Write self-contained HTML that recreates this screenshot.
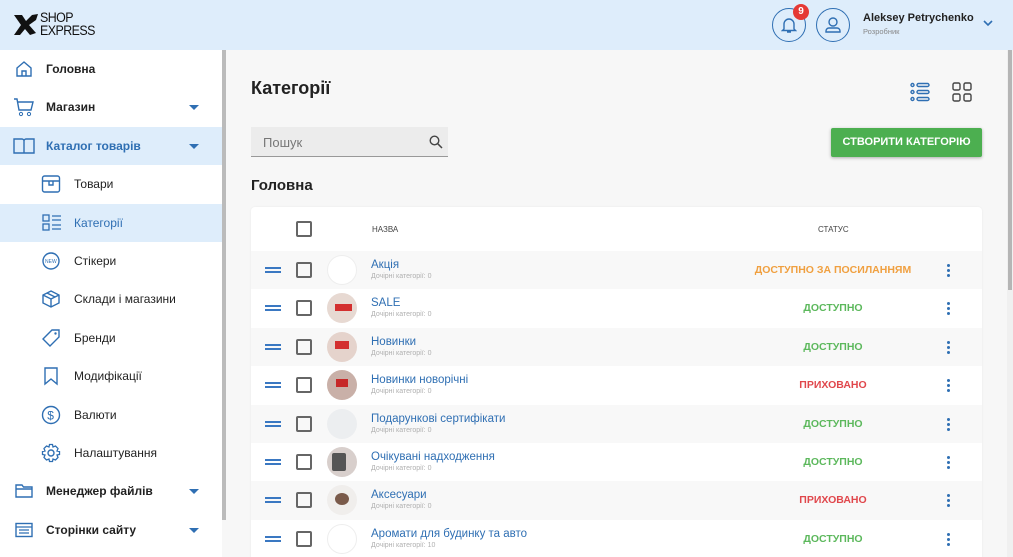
<!DOCTYPE html>
<html><head><meta charset="utf-8"><style>
*{box-sizing:border-box;margin:0;padding:0}
html,body{width:1013px;height:557px;overflow:hidden}
body{font-family:"Liberation Sans",sans-serif;background:#f7f7f7;position:relative}
.hdr{position:absolute;left:0;top:0;width:1013px;height:50px;background:#deedfb}
.side{position:absolute;left:0;top:50px;width:222px;height:507px;background:#fff}
.sbar{position:absolute;left:222px;top:50px;width:4px;height:470px;background:#bbb}
.rsb{position:absolute;left:1007px;top:50px;width:6px;height:507px;background:#f0f0f0}
.rsb div{position:absolute;left:1px;top:0;width:4px;height:240px;background:#b5b5b5}
.it{position:absolute;left:0;width:222px;height:38px;display:flex;align-items:center;font-size:12px;color:#222}
.it.sel{background:#deedfb;color:#2f6fb3}
.it svg{position:absolute}
.it .t{position:absolute}
.car{position:absolute;left:189px;top:17px;border:5px solid transparent;border-top:5px solid #2f6fb3;border-bottom:0;width:0;height:0}
.card{position:absolute;left:251px;top:207px;width:731px;height:360px;background:#fff;border-radius:4px;box-shadow:0 0 2px rgba(0,0,0,.06)}
.row{position:absolute;left:0;width:731px;height:38.4px}
.row.g{background:#f8f8f8}
.cb{position:absolute;left:45px;width:16px;height:16px;border:2px solid #666;border-radius:2px}
.drag{position:absolute;left:14px;width:16px;height:6px;border-top:2px solid #3a78c2;border-bottom:2px solid #3a78c2}
.av{position:absolute;left:76px;width:30px;height:30px;border-radius:50%;background:#e8e4e2}
.nm{position:absolute;left:120px;font-size:11.5px;color:#2f6fb3}
.sub{position:absolute;left:120px;font-size:7px;color:#b0b0b0}
.st{position:absolute;left:482px;width:200px;text-align:center;font-size:10.5px;font-weight:bold}
.dots{position:absolute;left:696px;width:3px}
.dots i{display:block;width:3px;height:3px;border-radius:50%;background:#2f6fb3;margin-bottom:2px}
.gr{color:#5cb85c}.rd{color:#e0474c}
</style></head><body>
<div class="hdr">
 <svg style="position:absolute;left:13px;top:13px" width="26" height="24" viewBox="0 0 26 24"><path d="M1 2 L9 2 L13 8 L19 2 L25 1 L23 7 L16 12 L23 20 L17 22 L12 16 L7 22 L1 22 L8 12 Z" fill="#111"/></svg>
 <div style="position:absolute;left:40px;top:12px;font-size:13.5px;line-height:12.5px;color:#111;letter-spacing:-.6px;transform:scaleX(.92);transform-origin:left">SHOP<br>EXPRESS</div>
 <div style="position:absolute;left:772px;top:8px;width:34px;height:34px;border:1px solid #2f6fb3;border-radius:50%"></div>
 <svg style="position:absolute;left:781px;top:16px" width="16" height="18" viewBox="0 0 16 18"><path d="M3 13 V8 a5 5 0 0 1 10 0 V13 L14.5 14.5 H1.5 Z M6 16 h4" fill="none" stroke="#2f6fb3" stroke-width="1.4"/></svg>
 <div style="position:absolute;left:793px;top:4px;width:16px;height:16px;border-radius:50%;background:#e53935;color:#fff;font-size:10px;font-weight:bold;text-align:center;line-height:16px">9</div>
 <div style="position:absolute;left:816px;top:8px;width:34px;height:34px;border:1px solid #2f6fb3;border-radius:50%"></div>
 <svg style="position:absolute;left:823px;top:15px" width="20" height="20" viewBox="0 0 20 20"><circle cx="10" cy="7" r="4" fill="none" stroke="#2f6fb3" stroke-width="1.4"/><path d="M3 17 v-1 a3 3 0 0 1 3-3 h8 a3 3 0 0 1 3 3 v1 Z" fill="none" stroke="#2f6fb3" stroke-width="1.4"/></svg>
 <div style="position:absolute;left:863px;top:12px;font-size:11px;font-weight:bold;color:#222">Aleksey Petrychenko</div>
 <div style="position:absolute;left:863px;top:27px;font-size:7.5px;color:#888">Розробник</div>
 <svg style="position:absolute;left:982px;top:19px" width="12" height="8" viewBox="0 0 12 8"><path d="M2 2 L6 6 L10 2" fill="none" stroke="#2f6fb3" stroke-width="1.6"/></svg>
</div>
<div class="side">
 <div class="it" style="top:0"><svg style="left:15px" width="18" height="18" viewBox="0 0 18 18"><path d="M2 8 L9 2 L16 8 V16 H2 Z M7 16 V11 H11 V16" fill="none" stroke="#2f6fb3" stroke-width="1.4"/></svg><span class="t" style="left:46px;font-weight:bold">Головна</span></div>
 <div class="it" style="top:38.4px"><svg style="left:13px" width="22" height="20" viewBox="0 0 22 20"><path d="M1 2 H4 L6 13 H18 L20 5 H5" fill="none" stroke="#2f6fb3" stroke-width="1.4"/><circle cx="8" cy="17" r="1.6" fill="none" stroke="#2f6fb3"/><circle cx="16" cy="17" r="1.6" fill="none" stroke="#2f6fb3"/></svg><span class="t" style="left:46px;font-weight:bold">Магазин</span><div class="car"></div></div>
 <div class="it sel" style="top:76.8px"><svg style="left:13px" width="22" height="18" viewBox="0 0 22 18"><path d="M1 2 H9 a2 2 0 0 1 2 2 V16 H1 Z M21 2 H13 a2 2 0 0 0 -2 2 V16 H21 Z" fill="none" stroke="#2f6fb3" stroke-width="1.4"/></svg><span class="t" style="left:46px;font-weight:bold">Каталог товарів</span><div class="car"></div></div>
 <div class="it" style="top:115.2px"><svg style="left:41px" width="20" height="20" viewBox="0 0 20 20"><rect x="1.5" y="2" width="17" height="16" rx="2" fill="none" stroke="#2f6fb3" stroke-width="1.4"/><path d="M1.5 7 H18.5 M8 7 V11 H12 V7" fill="none" stroke="#2f6fb3" stroke-width="1.4"/></svg><span class="t" style="left:74px">Товари</span></div>
 <div class="it sel" style="top:153.6px;color:#2f6fb3"><svg style="left:42px" width="20" height="18" viewBox="0 0 20 18"><rect x="1" y="1" width="6" height="6" fill="none" stroke="#2f6fb3" stroke-width="1.3"/><rect x="1" y="10" width="6" height="6" fill="none" stroke="#2f6fb3" stroke-width="1.3"/><path d="M10 2 H19 M10 6 H19 M10 11 H19 M10 15 H19" stroke="#2f6fb3" stroke-width="1.3"/></svg><span class="t" style="left:74px">Категорії</span></div>
 <div class="it" style="top:192px"><svg style="left:41px" width="20" height="20" viewBox="0 0 20 20"><circle cx="10" cy="10" r="8" fill="none" stroke="#2f6fb3" stroke-width="1.4"/><text x="4" y="12" font-size="5" fill="#2f6fb3" font-family="Liberation Sans">NEW</text></svg><span class="t" style="left:74px">Стікери</span></div>
 <div class="it" style="top:230.4px"><svg style="left:41px" width="20" height="20" viewBox="0 0 20 20"><path d="M10 2 L18 6 V14 L10 18 L2 14 V6 Z M2 6 L10 10 L18 6 M10 10 V18 M6 4 L14 8" fill="none" stroke="#2f6fb3" stroke-width="1.4"/></svg><span class="t" style="left:74px">Склади і магазини</span></div>
 <div class="it" style="top:268.8px"><svg style="left:41px" width="20" height="20" viewBox="0 0 20 20"><path d="M11 2 H18 V9 L9 18 L2 11 Z" fill="none" stroke="#2f6fb3" stroke-width="1.4"/><circle cx="14.5" cy="5.5" r="1.2" fill="#2f6fb3"/></svg><span class="t" style="left:74px">Бренди</span></div>
 <div class="it" style="top:307.2px"><svg style="left:43px" width="16" height="20" viewBox="0 0 16 20"><path d="M2 2 H14 V18 L8 13 L2 18 Z" fill="none" stroke="#2f6fb3" stroke-width="1.4"/></svg><span class="t" style="left:74px">Модифікації</span></div>
 <div class="it" style="top:345.6px"><svg style="left:41px" width="20" height="20" viewBox="0 0 20 20"><circle cx="10" cy="10" r="8.5" fill="none" stroke="#2f6fb3" stroke-width="1.4"/><text x="6.3" y="14.5" font-size="12" fill="#2f6fb3" font-family="Liberation Sans">$</text></svg><span class="t" style="left:74px">Валюти</span></div>
 <div class="it" style="top:384px"><svg style="left:41px" width="20" height="20" viewBox="0 0 20 20"><circle cx="10" cy="10" r="3" fill="none" stroke="#2f6fb3" stroke-width="1.4"/><path d="M8.5 1.5 H11.5 L12 4 L14.5 3 L17 5.5 L16 8 L18.5 8.5 V11.5 L16 12 L17 14.5 L14.5 17 L12 16 L11.5 18.5 H8.5 L8 16 L5.5 17 L3 14.5 L4 12 L1.5 11.5 V8.5 L4 8 L3 5.5 L5.5 3 L8 4 Z" fill="none" stroke="#2f6fb3" stroke-width="1.3"/></svg><span class="t" style="left:74px">Налаштування</span></div>
 <div class="it" style="top:422.4px"><svg style="left:15px" width="18" height="16" viewBox="0 0 18 16"><path d="M1 2 H7 L8.5 4 H17 V14 H1 Z M1 6 H17" fill="none" stroke="#2f6fb3" stroke-width="1.4"/></svg><span class="t" style="left:46px;font-weight:bold">Менеджер файлів</span><div class="car"></div></div>
 <div class="it" style="top:460.8px"><svg style="left:15px" width="18" height="16" viewBox="0 0 18 16"><rect x="1" y="1.5" width="16" height="13" fill="none" stroke="#2f6fb3" stroke-width="1.4"/><path d="M1 5 H17 M4 8 H14 M4 11 H14" stroke="#2f6fb3" stroke-width="1.2"/></svg><span class="t" style="left:46px;font-weight:bold">Сторінки сайту</span><div class="car"></div></div>
</div>
<div class="sbar"></div>
<div class="rsb"><div></div></div>

<div style="position:absolute;left:251px;top:78px;font-size:18px;font-weight:bold;color:#222">Категорії</div>
<svg style="position:absolute;left:910px;top:82px" width="20" height="20" viewBox="0 0 20 20"><g fill="none" stroke="#2f6fb3" stroke-width="1.4"><circle cx="2.5" cy="3" r="1.5"/><circle cx="2.5" cy="10" r="1.5"/><circle cx="2.5" cy="17" r="1.5"/><rect x="7" y="1.5" width="12" height="3" rx="1.5"/><rect x="7" y="8.5" width="12" height="3" rx="1.5"/><rect x="7" y="15.5" width="12" height="3" rx="1.5"/></g></svg>
<svg style="position:absolute;left:952px;top:82px" width="20" height="20" viewBox="0 0 20 20"><g fill="none" stroke="#444" stroke-width="1.4"><rect x="1" y="1" width="7" height="7" rx="1.5"/><rect x="12" y="1" width="7" height="7" rx="1.5"/><rect x="1" y="12" width="7" height="7" rx="1.5"/><rect x="12" y="12" width="7" height="7" rx="1.5"/></g></svg>
<div style="position:absolute;left:251px;top:127px;width:197px;height:30px;background:#ececec;border-bottom:1px solid #999"><span style="position:absolute;left:12px;top:8px;font-size:13px;color:#777">Пошук</span><svg style="position:absolute;left:178px;top:8px" width="14" height="14" viewBox="0 0 14 14"><circle cx="5.5" cy="5.5" r="4.3" fill="none" stroke="#444" stroke-width="1.4"/><path d="M8.7 8.7 L13 13" stroke="#444" stroke-width="1.5"/></svg></div>
<div style="position:absolute;left:831px;top:128px;width:151px;height:29px;background:#4caf50;border-radius:2px;box-shadow:0 1px 3px rgba(0,0,0,.3);color:#fff;font-size:11px;font-weight:bold;text-align:center;line-height:29px;white-space:nowrap">СТВОРИТИ КАТЕГОРІЮ</div>
<div style="position:absolute;left:251px;top:177px;font-size:15px;font-weight:bold;color:#222">Головна</div>

<div class="card">
 <div class="cb" style="top:14px"></div>
 <div style="position:absolute;left:121px;top:18px;font-size:8px;color:#444">НАЗВА</div>
 <div style="position:absolute;left:567px;top:18px;font-size:8px;color:#444">СТАТУС</div>
</div>
<div id="rows" style="position:absolute;left:251px;top:251px;width:731px;height:306px;overflow:hidden">
 <div class="row g" style="top:0"><div class="drag" style="top:16px"></div><div class="cb" style="top:11px"></div><div class="av" style="top:4px;background:#fff;border:1px solid #eee"></div><div class="nm" style="top:8px">Акція</div><div class="sub" style="top:22px">Дочірні категорії: 0</div><div class="st" style="top:13px;color:#f0a040">ДОСТУПНО ЗА ПОСИЛАННЯМ</div><div class="dots" style="top:13px"><i></i><i></i><i></i></div></div>
 <div class="row" style="top:38.4px"><div class="drag" style="top:16px"></div><div class="cb" style="top:11px"></div><div class="av" style="top:4px;background:#e7d9d2"><div style="position:absolute;left:8px;top:11px;width:17px;height:7px;background:#d32f2f"></div></div><div class="nm" style="top:8px">SALE</div><div class="sub" style="top:22px">Дочірні категорії: 0</div><div class="st gr" style="top:13px">ДОСТУПНО</div><div class="dots" style="top:13px"><i></i><i></i><i></i></div></div>
 <div class="row g" style="top:76.8px"><div class="drag" style="top:16px"></div><div class="cb" style="top:11px"></div><div class="av" style="top:4px;background:#e5d3cc"><div style="position:absolute;left:8px;top:9px;width:14px;height:8px;background:#d32f2f"></div></div><div class="nm" style="top:8px">Новинки</div><div class="sub" style="top:22px">Дочірні категорії: 0</div><div class="st gr" style="top:13px">ДОСТУПНО</div><div class="dots" style="top:13px"><i></i><i></i><i></i></div></div>
 <div class="row" style="top:115.2px"><div class="drag" style="top:16px"></div><div class="cb" style="top:11px"></div><div class="av" style="top:4px;background:#c9b0a8"><div style="position:absolute;left:9px;top:9px;width:12px;height:8px;background:#c62828"></div></div><div class="nm" style="top:8px">Новинки новорічні</div><div class="sub" style="top:22px">Дочірні категорії: 0</div><div class="st rd" style="top:13px">ПРИХОВАНО</div><div class="dots" style="top:13px"><i></i><i></i><i></i></div></div>
 <div class="row g" style="top:153.6px"><div class="drag" style="top:16px"></div><div class="cb" style="top:11px"></div><div class="av" style="top:4px;background:#eceef0"></div><div class="nm" style="top:8px">Подарункові сертифікати</div><div class="sub" style="top:22px">Дочірні категорії: 0</div><div class="st gr" style="top:13px">ДОСТУПНО</div><div class="dots" style="top:13px"><i></i><i></i><i></i></div></div>
 <div class="row" style="top:192px"><div class="drag" style="top:16px"></div><div class="cb" style="top:11px"></div><div class="av" style="top:4px;background:#d8cfcc"><div style="position:absolute;left:5px;top:6px;width:14px;height:18px;background:#555;border-radius:2px"></div></div><div class="nm" style="top:8px">Очікувані надходження</div><div class="sub" style="top:22px">Дочірні категорії: 0</div><div class="st gr" style="top:13px">ДОСТУПНО</div><div class="dots" style="top:13px"><i></i><i></i><i></i></div></div>
 <div class="row g" style="top:230.4px"><div class="drag" style="top:16px"></div><div class="cb" style="top:11px"></div><div class="av" style="top:4px;background:#f0eeec"><div style="position:absolute;left:8px;top:8px;width:14px;height:12px;background:#7a5a4a;border-radius:50%"></div></div><div class="nm" style="top:8px">Аксесуари</div><div class="sub" style="top:22px">Дочірні категорії: 0</div><div class="st rd" style="top:13px">ПРИХОВАНО</div><div class="dots" style="top:13px"><i></i><i></i><i></i></div></div>
 <div class="row" style="top:268.8px"><div class="drag" style="top:16px"></div><div class="cb" style="top:11px"></div><div class="av" style="top:4px;background:#fff;border:1px solid #eee"></div><div class="nm" style="top:8px">Аромати для будинку та авто</div><div class="sub" style="top:22px">Дочірні категорії: 10</div><div class="st gr" style="top:13px">ДОСТУПНО</div><div class="dots" style="top:13px"><i></i><i></i><i></i></div></div>
</div>
</body></html>
